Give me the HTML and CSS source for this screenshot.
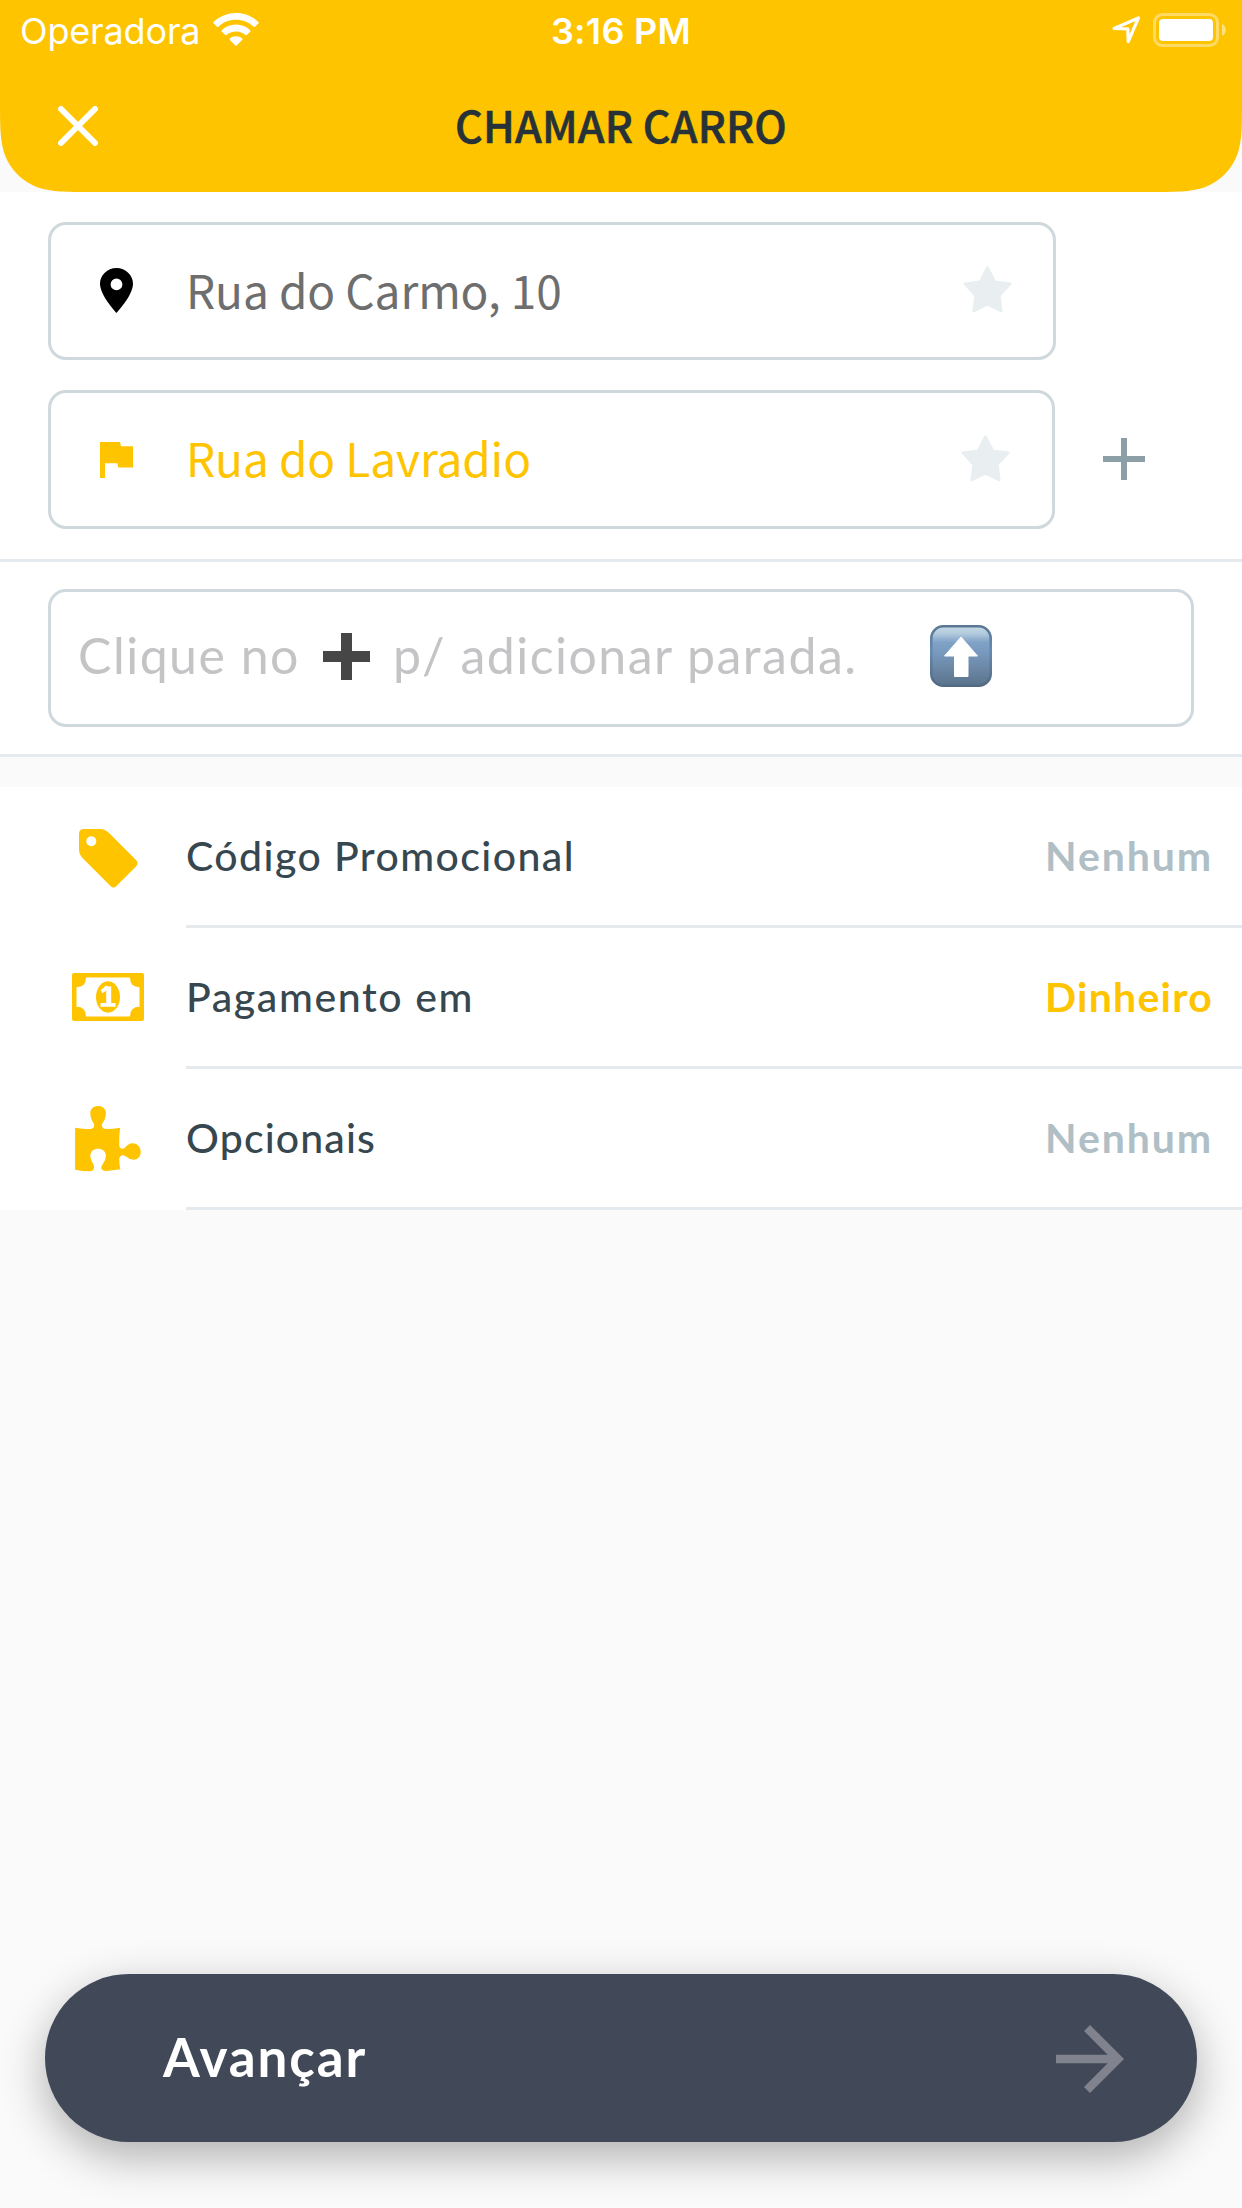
FILE: index.html
```html
<!DOCTYPE html>
<html lang="pt-BR">
<head>
<meta charset="utf-8">
<title>Chamar carro</title>
<link rel="stylesheet" href="styles.css">
</head>
<body>
<div class="screen">
  <header class="header">
    <div class="status">
      <div class="status-left">
        <span class="carrier">Operadora</span>
        <svg class="wifi" width="46" height="34" viewBox="0 0 46 34">
          <path fill="#fff" d="M23 0C14.300 0 6.400 3.400 .5 9.100Q0 9.700 .5 10.300L4 13.800Q4.700 14.300 5.300 13.800C10 9.400 16.200 6.800 23 6.800S36 9.400 40.700 13.800Q41.300 14.300 42 13.800L45.500 10.300Q46 9.700 45.500 9.100C39.600 3.400 31.700 0 23 0Z"/>
          <path fill="#fff" d="M23 11.600C17.500 11.600 12.500 13.700 8.700 17.200Q8.100 17.900 8.700 18.500L12.200 22Q12.900 22.600 13.500 22C16 19.800 19.300 18.400 23 18.400S30 19.800 32.500 22Q33.100 22.600 33.800 22L37.300 18.500Q37.900 17.900 37.300 17.200C33.500 13.700 28.500 11.600 23 11.600Z"/>
          <path fill="#fff" d="M23 23.200C20.600 23.200 18.400 24.100 16.700 25.500Q16.100 26.100 16.700 26.700L22.300 32.400Q23 33.100 23.700 32.400L29.300 26.700Q29.900 26.100 29.300 25.500C27.600 24.100 25.400 23.200 23 23.200Z"/>
        </svg>
      </div>
      <span class="clock">3:16 PM</span>
      <div class="status-right">
        <svg width="29" height="28" viewBox="0 0 29 28"><path fill="none" stroke="#fff" stroke-width="3.200" stroke-linejoin="round" d="M2.100 12.500L26.400 2L16.200 25.600L15.800 12.800Z"/></svg>
        <svg width="74" height="34" viewBox="0 0 74 34">
          <rect x="1.500" y="1.500" width="63" height="31" rx="8" fill="none" stroke="#fff" stroke-opacity=".4" stroke-width="3"/>
          <rect x="6" y="6" width="54" height="22" rx="4" fill="#fff"/>
          <path d="M69 11C74 13 74 21 69 23Z" fill="#fff" fill-opacity=".5"/>
        </svg>
      </div>
    </div>
    <div class="navbar">
      <svg class="close" width="40" height="40" viewBox="0 0 40 40"><path d="M3 3L37 37M37 3L3 37" stroke="#fff" stroke-width="6" stroke-linecap="round"/></svg>
      <h1 class="title">CHAMAR CARRO</h1>
    </div>
  </header>

  <section class="route">
    <div class="address address-origin">
      <svg class="pin" width="33" height="45" viewBox="0 0 33 45"><path fill-rule="evenodd" d="M16.500 0C7.400 0 0 7.100 0 15.800C0 27.500 16.500 45 16.500 45S33 27.500 33 15.800C33 7.100 25.600 0 16.500 0ZM16.500 10.500a5.900 5.900 0 1 1 0 11.800a5.900 5.900 0 1 1 0-11.800Z"/></svg>
      <span class="address-text">Rua do Carmo, 10</span>
      <svg class="star" width="49" height="47" viewBox="0 0 49 47"><path d="M24.500 1.700L32 15.900L47.300 17.700L36.400 29.500L38.300 45.200L24.500 38.300L10.700 45.200L12.600 29.500L1.700 17.700L17 15.900Z"/></svg>
    </div>
    <div class="route-row">
      <div class="address address-destination">
        <svg width="33" height="36" viewBox="0 0 33 36"><path fill="#ffc400" d="M0 0H20L21 4.300H33V25.500H18.200L17.400 21.300H5V36H0Z"/></svg>
        <span class="address-text">Rua do Lavradio</span>
        <svg class="star" width="49" height="47" viewBox="0 0 49 47"><path d="M24.500 1.700L32 15.900L47.300 17.700L36.400 29.500L38.300 45.200L24.500 38.300L10.700 45.200L12.600 29.500L1.700 17.700L17 15.900Z"/></svg>
      </div>
      <svg class="add" width="42" height="42" viewBox="0 0 42 42"><path fill="#8d9fa6" d="M18 0H24V18H42V24H24V42H18V24H0V18H18Z"/></svg>
    </div>
  </section>

  <section class="stop">
    <div class="stop-field">
      <span class="hint">Clique no</span>
      <svg class="hint-icon" width="47" height="47" viewBox="0 0 47 47"><path fill="#464646" d="M18 0H29V18H47V29H29V47H18V29H0V18H18Z"/></svg>
      <span class="hint">p/ adicionar parada.</span>
      <svg class="hint-icon" width="62" height="62" viewBox="0 0 62 62">
        <defs>
          <linearGradient id="key" x2="0" y2="1"><stop offset="0" stop-color="#c6d8e6"/><stop offset=".12" stop-color="#b3cbdd"/><stop offset=".27" stop-color="#7fa2c7"/><stop offset=".45" stop-color="#7899bd"/><stop offset="1" stop-color="#5b738c"/></linearGradient>
          <linearGradient id="rim" x2="0" y2="1"><stop offset="0" stop-color="#587894"/><stop offset=".4" stop-color="#668bb2"/><stop offset="1" stop-color="#526a82"/></linearGradient>
        </defs>
        <rect x="1.300" y="1.300" width="59.400" height="59.400" rx="12" fill="url(#key)" stroke="url(#rim)" stroke-width="2.600"/>
        <path fill="#fff" stroke="#fff" stroke-linejoin="round" d="M31 12L47.500 31H38V51.500H24.500V31H14.500Z"/>
      </svg>
    </div>
  </section>

  <section class="options">
    <div class="option">
      <div class="option-icon">
        <svg class="tag" width="59" height="59" viewBox="0 0 59 59"><path fill="#ffc400" fill-rule="evenodd" d="M5 0H21.500Q26 0 29.800 3.800L57 31Q60 34.200 57 37.500L37.500 57Q34.500 60 31.500 57L4 29.500Q0 25.500 0 21V5Q0 0 5 0ZM12.300 7.300a5 5 0 1 0 0 10a5 5 0 1 0 0-10Z"/></svg>
      </div>
      <div class="option-body"><span class="label">Código Promocional</span><span class="value">Nenhum</span></div>
    </div>
    <div class="option">
      <div class="option-icon">
        <svg class="bill" width="72" height="48" viewBox="0 0 72 48">
          <path fill="#ffc400" fill-rule="evenodd" d="M2 0H70Q72 0 72 2V46Q72 48 70 48H2Q0 48 0 46V2Q0 0 2 0ZM14 4.500Q14 14.200 4.500 14.200V33.800Q14 33.800 14 43.500H58Q58 33.800 67.500 33.800V14.200Q58 14.200 58 4.500Z"/>
          <ellipse cx="36" cy="24" rx="12" ry="15.700" fill="#ffc400"/>
          <path fill="none" stroke="#fff" stroke-width="3.800" d="M29.500 18.500Q33 17 35.300 13.500M28.500 31.800H43.500"/>
          <path stroke="#fff" stroke-width="5" d="M36.700 13.400V32"/>
        </svg>
      </div>
      <div class="option-body"><span class="label label-payment">Pagamento em</span><span class="value value-active">Dinheiro</span></div>
    </div>
    <div class="option">
      <div class="option-icon">
        <svg width="66" height="66" viewBox="75 1107 66 66"><path fill="#ffc400" d="M75.100 1128.700Q85 1130.500 90 1130Q95 1129.500 94 1125Q90.300 1119.500 90.300 1114.300C90.300 1104.600 105.900 1104.600 105.900 1114.300Q105.900 1119.500 102 1125Q101.200 1129.500 105.900 1130Q112 1130.300 120.300 1128.700Q119.200 1134 119.200 1140V1146Q119.800 1151 124.500 1149.300Q128.500 1144.300 132.500 1144.300C143 1144.300 143.500 1160.700 133.600 1160.700Q129.500 1160.700 126 1157.500Q120.500 1154 119.200 1160Q119.200 1165 120.300 1170.300Q112 1171.300 106.600 1172C101 1172 100 1169 102.500 1165.500Q105.900 1161 105.900 1156.700C105.900 1147.500 90.300 1147.500 90.300 1156.700Q90.300 1161 93.500 1165.500Q95.500 1172 89.600 1172.300Q83 1172.300 75.100 1170.700Z"/></svg>
      </div>
      <div class="option-body"><span class="label label-extras">Opcionais</span><span class="value">Nenhum</span></div>
    </div>
  </section>

  <button class="next">
    <span class="next-label">Avançar</span>
    <svg width="68" height="68" viewBox="4 4 16 16"><path fill="#80838e" d="M12 4l-1.410 1.410L16.170 11H4v2h12.170l-5.580 5.590L12 20l8-8z"/></svg>
  </button>
</div>
</body>
</html>
```
FILE: styles.css
```css
* { box-sizing: border-box; }
body { margin: 0; }
svg { display: block; flex: none; }

.screen {
  display: flex;
  flex-direction: column;
  width: 1242px;
  height: 2208px;
  background: #fafafa;
  font-family: Lato, "Open Sans", sans-serif;
  overflow: hidden;
}

/* Header with smoothed bottom corners */
.header {
  height: 192px;
  background: #ffc400;
  clip-path: path("M0 0H1242V100.300C1242 126.700 1242 139.900 1237.500 154.100C1231.900 169.600 1219.600 181.900 1204.100 187.500C1189.900 192 1176.700 192 1150.300 192H91.700C65.300 192 52.100 192 37.900 187.500C22.400 181.900 10.100 169.600 4.500 154.100C0 139.900 0 126.700 0 100.300Z");
}
.status {
  display: grid;
  grid-template-columns: 1fr auto 1fr;
  align-items: center;
  height: 60px;
  padding: 0 15px 0 20px;
  color: #fff;
  font-family: Inter, sans-serif;
  font-size: 36px;
  line-height: 44px;
}
.status-left { display: flex; align-items: center; gap: 13px; }
.status-right { display: flex; align-items: center; justify-content: flex-end; gap: 12px; }
.carrier { padding-top: 2px; letter-spacing: -.15px; }
.clock { padding: 2px 5px 0 0; font-weight: 600; letter-spacing: .3px; }
.navbar {
  display: grid;
  grid-template-columns: 40px 1fr 40px;
  align-items: center;
  height: 132px;
  padding: 0 58px;
}
.title {
  margin: 0;
  padding-bottom: 5px;
  color: #263238;
  font: 500 43px/60px "Noto Sans CJK SC", "Noto Sans", sans-serif;
  letter-spacing: .15px;
  text-align: center;
  -webkit-text-stroke: .6px #263238;
}

/* Addresses */
.route {
  display: flex;
  flex-direction: column;
  gap: 30px;
  height: 370px;
  padding: 30px 97px 30px 48px;
  background: #fff;
  border-bottom: 3px solid #e5eaee;
}
.route-row { display: flex; align-items: center; justify-content: space-between; }
.address {
  display: grid;
  grid-template-columns: 86px 1fr 49px;
  align-items: center;
  border: 3px solid #cfd8dc;
  border-radius: 18px;
  padding: 0 41px 0 49px;
}
.address-origin { width: 1008px; height: 138px; }
.address-destination { width: 1007px; height: 139px; padding-right: 42px; }
.address-text {
  padding-bottom: 4px;
  color: #6e6e6e;
  font: 400 46px/64px "Noto Sans CJK SC", "Noto Sans", sans-serif;
  letter-spacing: -.1px;
}
.address-destination .address-text { padding-bottom: 5px; color: #ffc400; }
.pin { margin-bottom: 1px; }
.add { margin-bottom: 1px; }
.star {
  margin-bottom: 3px;
  fill: #e9eff1;
  stroke: #e9eff1;
  stroke-width: 2.600;
  stroke-linejoin: round;
}

/* Extra stop hint */
.stop {
  height: 195px;
  padding: 27px 48px;
  background: #fff;
  border-bottom: 3px solid #e5eaee;
}
.stop-field {
  display: grid;
  grid-template-columns: 245px 70px 537px 62px;
  align-items: center;
  height: 138px;
  padding-left: 27px;
  border: 3px solid #cfd8dc;
  border-radius: 18px;
}
.hint {
  padding-bottom: 6px;
  color: #c4c4c6;
  font-size: 50px;
  line-height: 60px;
  letter-spacing: 1.480px;
  white-space: nowrap;
}
.hint-icon { margin-bottom: 4px; }

/* Options list */
.options { margin-top: 30px; background: #fff; }
.option { display: flex; height: 141px; }
.option-icon {
  display: flex;
  align-items: center;
  justify-content: center;
  width: 186px;
  padding: 0 0 2px 30px;
}
.tag { margin-top: 4px; }
.bill { margin-bottom: 1px; }
.option-body {
  display: flex;
  flex: 1;
  align-items: center;
  justify-content: space-between;
  padding: 0 31px 0 0;
  border-bottom: 3px solid #e5eaee;
  font-size: 41px;
  line-height: 50px;
}
.label { color: #37474f; font-weight: 500; letter-spacing: 1.420px; }
.label-payment { letter-spacing: 1.600px; }
.label-extras { letter-spacing: 1.150px; }
.value { color: #b0bec5; font-weight: 700; letter-spacing: 1.900px; margin-right: -2px; }
.value-active { color: #ffc400; letter-spacing: 1.250px; }

/* Primary action */
.next {
  display: flex;
  align-items: center;
  justify-content: space-between;
  width: 1152px;
  height: 168px;
  margin: auto 45px 66px;
  padding: 0 73px 0 118px;
  border: 0;
  border-radius: 84px;
  background: #414857;
  box-shadow: 0 15px 45px rgba(0, 0, 0, .3);
  color: #fff;
  font-family: inherit;
}
.next svg { margin-top: 2px; }
.next-label {
  padding-bottom: 3px;
  font-size: 53px;
  font-weight: 700;
  line-height: 64px;
  letter-spacing: 1.900px;
}
```
